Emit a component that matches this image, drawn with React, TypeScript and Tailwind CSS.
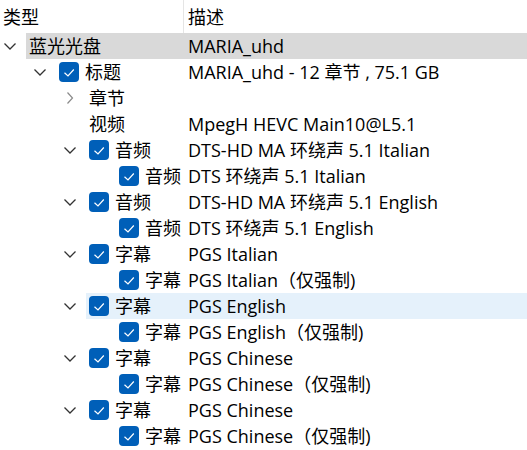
import React from "react";

type Row = {
  level: number;
  chevron?: "down" | "right";
  checked?: boolean;
  type: string;
  desc: string;
  state?: "focus" | "selected";
};

const rows: Row[] = [
  { level: 0, chevron: "down", type: "蓝光光盘", desc: "MARIA_uhd", state: "focus" },
  { level: 1, chevron: "down", checked: true, type: "标题", desc: "MARIA_uhd - 12 章节 , 75.1 GB" },
  { level: 2, chevron: "right", type: "章节", desc: "" },
  { level: 2, type: "视频", desc: "MpegH HEVC Main10@L5.1" },
  { level: 2, chevron: "down", checked: true, type: "音频", desc: "DTS-HD MA 环绕声 5.1 Italian" },
  { level: 3, checked: true, type: "音频", desc: "DTS 环绕声 5.1 Italian" },
  { level: 2, chevron: "down", checked: true, type: "音频", desc: "DTS-HD MA 环绕声 5.1 English" },
  { level: 3, checked: true, type: "音频", desc: "DTS 环绕声 5.1 English" },
  { level: 2, chevron: "down", checked: true, type: "字幕", desc: "PGS Italian" },
  { level: 3, checked: true, type: "字幕", desc: "PGS Italian（仅强制)" },
  { level: 2, chevron: "down", checked: true, type: "字幕", desc: "PGS English", state: "selected" },
  { level: 3, checked: true, type: "字幕", desc: "PGS English（仅强制)" },
  { level: 2, chevron: "down", checked: true, type: "字幕", desc: "PGS Chinese" },
  { level: 3, checked: true, type: "字幕", desc: "PGS Chinese（仅强制)" },
  { level: 2, chevron: "down", checked: true, type: "字幕", desc: "PGS Chinese" },
  { level: 3, checked: true, type: "字幕", desc: "PGS Chinese（仅强制)" },
];

// indent per tree level
const indent = ["w-0", "w-[30px]", "w-[60px]", "w-[90px]"];

function Chevron({ dir }: { dir: "down" | "right" }) {
  if (dir === "right") {
    return (
      <svg width="12" height="14" viewBox="0 0 12 14" fill="none">
        <path d="M3.5 1.5 L8.5 7 L3.5 12.5" stroke="#8a8a8a" strokeWidth="1.2" />
      </svg>
    );
  }
  return (
    <svg width="14" height="10" viewBox="0 0 14 10" fill="none">
      <path d="M1.5 2.5 L7 8 L12.5 2.5" stroke="#333333" strokeWidth="1.3" />
    </svg>
  );
}

function Checkbox() {
  return (
    <span className="flex h-[20px] w-[20px] shrink-0 items-center justify-center rounded-[4px] bg-[#005fb8]">
      <svg width="20" height="20" viewBox="0 0 20 20" fill="none">
        <path d="M5.5 10.8 L9 14 L14.8 7.5" stroke="white" strokeWidth="1.2" />
      </svg>
    </span>
  );
}

function TreeRow({ row }: { row: Row }) {
  const bg =
    row.state === "focus"
      ? "bg-[#d9d9d9]"
      : row.state === "selected"
      ? "bg-[#e5f1fb]"
      : "";
  return (
    <div className="flex h-[26px] items-center">
      <div className={`${indent[row.level]} shrink-0`} />
      <div className="flex w-[20px] shrink-0 items-center justify-center">
        {row.chevron && <Chevron dir={row.chevron} />}
      </div>
      <div className={`ml-[6px] flex h-full flex-1 items-center ${bg}`}>
        <div className="flex flex-1 items-center gap-[6px] pl-[3px]">
          {row.checked && <Checkbox />}
          <span className="whitespace-nowrap">{row.type}</span>
        </div>
        <div className="w-[339px] shrink-0 whitespace-nowrap">{row.desc}</div>
      </div>
    </div>
  );
}

export default function App() {
  return (
    <div
      className="h-[450px] w-[527px] overflow-hidden bg-white text-[18px] leading-none text-black"
      style={{ fontFamily: '"Open Sans", "Noto Sans CJK SC", sans-serif' }}
    >
      <div className="flex h-[33px] items-center">
        <div className="flex h-full w-[184px] items-center border-r border-[#e5e5e5] pl-[3px]">
          类型
        </div>
        <div className="pl-[4px]">描述</div>
      </div>
      {rows.map((r, i) => (
        <TreeRow key={i} row={r} />
      ))}
    </div>
  );
}
